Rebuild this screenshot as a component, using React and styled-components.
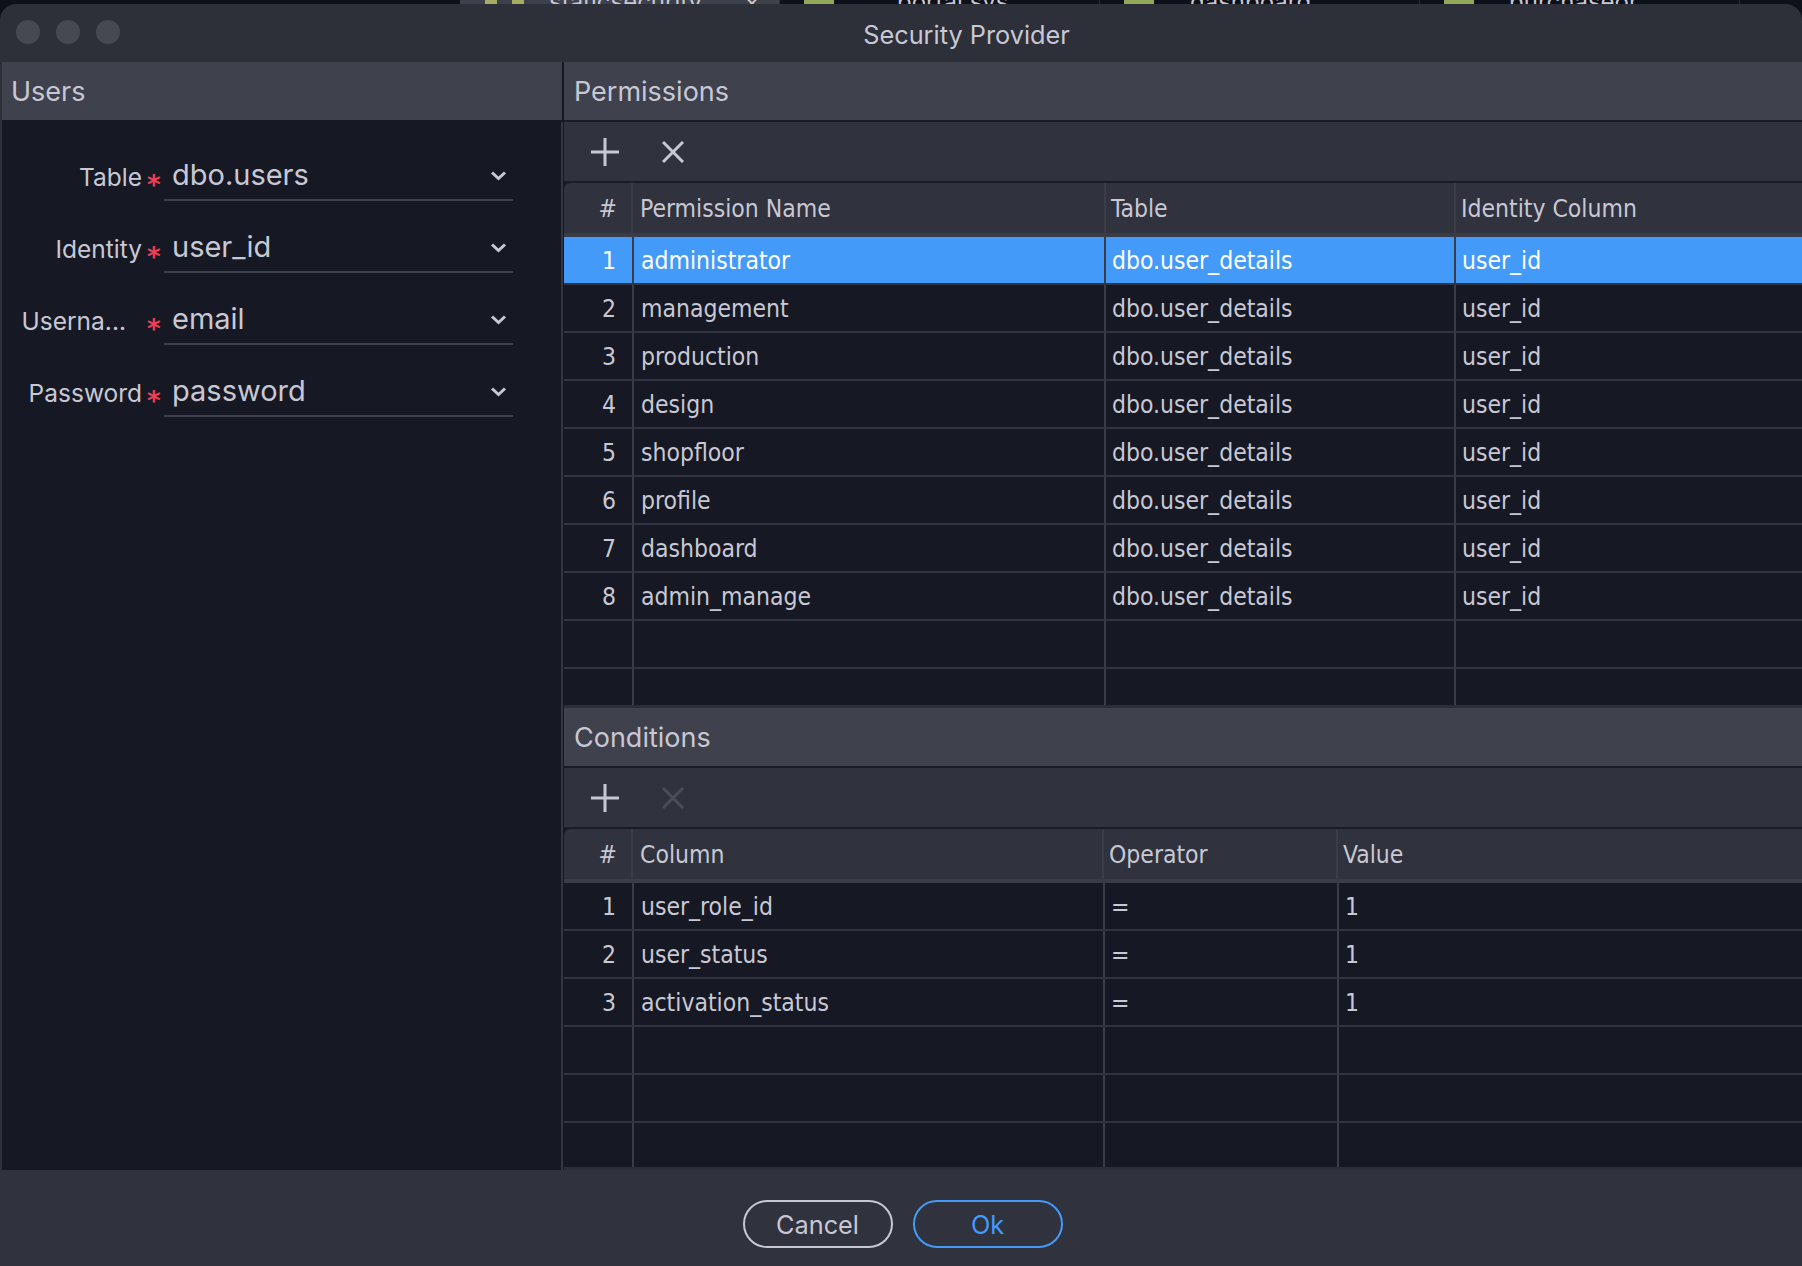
import styled, { createGlobalStyle } from 'styled-components'

const GlobalStyle = createGlobalStyle`
  html, body {
    margin: 0;
    padding: 0;
    background: #0e101a;
  }

  * {
    box-sizing: border-box;
  }
`

const Screen = styled.div`
  width: 1802px;
  height: 1266px;
  overflow: hidden;
  display: flex;
  flex-direction: column;
  font-family: Inter, "Liberation Sans", sans-serif;
  color: #c8c8d4;
`

const TabStrip = styled.div`
  height: 4px;
  flex: none;
  display: flex;
  overflow: hidden;
  padding-left: 460px;
  background: #0e101a;
`

const BgTab = styled.div`
  width: 320px;
  height: 4px;
  flex: none;
  display: flex;
  gap: 15px;
  padding-left: ${(p) => (p.$active ? '25px' : '24px')};
  background: ${(p) => (p.$active ? '#3e404b' : 'transparent')};
  border-right: 1px solid #2c2e38;
`

const BgTabIcon = styled.span`
  width: ${(p) => (p.$small ? '12px' : '30px')};
  height: 4px;
  flex: none;
  background: ${(p) => (p.$small ? '#a8ab62' : '#93a75a')};
`

const BgTabText = styled.span`
  margin-left: ${(p) => p.$inset}px;
  font-size: 24px;
  line-height: 18px;
  margin-top: -7px;
  color: #c8c8d4;
  white-space: nowrap;
`

const Window = styled.div`
  flex: 1;
  min-height: 0;
  display: flex;
  flex-direction: column;
  border-radius: 16px 16px 0 0;
  background: #2d2f39;
  overflow: hidden;
`

const TitleBar = styled.div`
  height: 58px;
  flex: none;
  position: relative;
  display: flex;
  align-items: center;
  justify-content: center;
  padding-left: 131px;
  padding-top: 3px;
  font-size: 25.3px;
  color: #c8c8d4;
`

const TrafficLights = styled.div`
  position: absolute;
  left: 16px;
  top: 16px;
  display: flex;
  gap: 16px;
`

const Light = styled.span`
  width: 24px;
  height: 24px;
  border-radius: 50%;
  background: #474952;
`

const Main = styled.div`
  flex: 1;
  min-height: 0;
  display: flex;
`

const LeftPanel = styled.section`
  width: 562px;
  flex: none;
  display: flex;
  flex-direction: column;
  margin-left: 2px;
  background: #161924;
`

const PanelHeader = styled.div`
  height: ${(p) => (p.$wide ? '60px' : '58px')};
  flex: none;
  display: flex;
  align-items: center;
  padding-left: ${(p) => (p.$left ? '9px' : '10px')};
  font-size: 27px;
  color: #c8c8d4;
  background: #3f414d;
  border-bottom: ${(p) => (p.$wide ? '2px solid #1a1c27' : 'none')};
  margin-right: ${(p) => (p.$left ? '2px' : '0')};
`

const UsersForm = styled.div`
  flex: 1;
  margin-top: 2px;
  margin-right: 1px;
  padding-top: 33px;
  padding-right: 48px;
  display: flex;
  flex-direction: column;
  gap: 26px;
  border-right: 2px solid #34363f;
`

const FormRow = styled.div`
  display: grid;
  grid-template-columns: 140px 22px 1fr;
  grid-template-rows: 46px;
`

const FieldLabel = styled.label`
  font-size: 24.5px;
  line-height: 44px;
  text-align: right;
  padding-right: ${(p) => (p.$clipped ? '16px' : '0')};
  white-space: nowrap;
  color: #c8c8d4;
`

const Required = styled.span`
  font-family: "DejaVu Sans", sans-serif;
  font-weight: 700;
  font-size: 26px;
  line-height: 46px;
  padding-left: 5px;
  padding-top: 7px;
  color: #f23e55;
`

const SelectBox = styled.div`
  display: flex;
  align-items: center;
  justify-content: space-between;
  padding: 0 7px 5px 8px;
  font-size: 29px;
  color: #c8c8d4;
  border-bottom: 2px solid #3e404b;
`

const SelectArrow = styled.svg`
  display: block;
  margin-top: 3px;
  fill: none;
  stroke: #c8c8d4;
  stroke-width: 3;
`

const RightPanel = styled.section`
  flex: 1;
  min-width: 0;
  display: flex;
  flex-direction: column;
`

const TableSection = styled.div`
  height: ${(p) => p.$height}px;
  flex: none;
  display: flex;
  flex-direction: column;
`

const Toolbar = styled.div`
  height: 61px;
  flex: none;
  display: flex;
  align-items: center;
  gap: 43px;
  padding-left: 27px;
  background: #30323d;
  border-bottom: 2px solid #1a1c27;
`

const ToolIcon = styled.svg`
  display: block;
  fill: none;
  stroke: ${(p) => (p.$disabled ? '#4a4c57' : '#c8c8d4')};
  stroke-width: 3;
`

const TableFrame = styled.div`
  flex: 1;
  min-height: 0;
  overflow: hidden;
  background: #161924;
  border-bottom: 3px solid #2b2d37;
  font-family: "DejaVu Sans", sans-serif;
  font-stretch: condensed;
  font-size: 24.5px;
`

const HeadRow = styled.div`
  display: grid;
  grid-template-columns: ${(p) => p.$columns};
  height: 54px;
  background: #30323d;
  border-bottom: 4px solid #3a3c47;
  border-top-left-radius: 6px;
  color: #c8c8d4;
`

const HeadCell = styled.div`
  display: flex;
  align-items: center;
  padding: 0 ${(p) => (p.$num ? '14px' : p.$first ? '7px' : '5px')};
  justify-content: ${(p) => (p.$num ? 'flex-end' : 'flex-start')};
  border-left: ${(p) => (p.$num ? 'none' : '2px solid #3a3c47')};
`

const BodyRow = styled.div`
  display: grid;
  grid-template-columns: ${(p) => p.$columns};
  height: 48px;
  background: ${(p) => (p.$selected ? '#439af8' : 'transparent')};
  color: ${(p) => (p.$selected ? '#ffffff' : '#c8c8d4')};
  border-bottom: 2px solid #31333d;
`

const BodyCell = styled.div`
  display: flex;
  align-items: center;
  padding: 0 ${(p) => (p.$num ? '16px' : p.$first ? '7px' : '6px')};
  justify-content: ${(p) => (p.$num ? 'flex-end' : 'flex-start')};
  border-left: ${(p) => (p.$num ? 'none' : '2px solid #3a3c46')};
  white-space: nowrap;
`

const Footer = styled.div`
  height: 96px;
  flex: none;
  display: flex;
  justify-content: center;
  gap: 20px;
  padding-top: 30px;
  padding-left: 3px;
  background: #30323d;
`

const DialogButton = styled.button`
  width: 150px;
  height: 48px;
  border-radius: 24px;
  background: transparent;
  border: 2px solid ${(p) => (p.$primary ? '#439af8' : '#c8c8d4')};
  color: ${(p) => (p.$primary ? '#439af8' : '#c8c8d4')};
  font-family: Inter, "Liberation Sans", sans-serif;
  font-size: 25.3px;
  padding: 0;
`

const userFields = [
  { label: 'Table', value: 'dbo.users' },
  { label: 'Identity', value: 'user_id' },
  { label: 'Userna...', value: 'email', clipped: true },
  { label: 'Password', value: 'password' },
]

const permissions = ['administrator', 'management', 'production', 'design', 'shopfloor', 'profile', 'dashboard', 'admin_manage']

const conditions = [
  ['user_role_id', '=', '1'],
  ['user_status', '=', '1'],
  ['activation_status', '=', '1'],
]

const permissionHeadCols = '67px 473px 350px 1fr'
const permissionBodyCols = '68px 472px 350px 1fr'
const conditionHeadCols = '67px 471px 234px 1fr'
const conditionBodyCols = '68px 471px 234px 1fr'

function PlusIcon() {
  return (
    <ToolIcon width="28" height="28" viewBox="0 0 28 28">
      <path d="M14 0v28M0 14h28" />
    </ToolIcon>
  )
}

function CloseIcon({ disabled }) {
  return (
    <ToolIcon $disabled={disabled} width="22" height="22" viewBox="0 0 22 22">
      <path d="M1 1l20 20M21 1L1 21" />
    </ToolIcon>
  )
}

function Chevron() {
  return (
    <SelectArrow width="15" height="10" viewBox="0 0 15 10">
      <path d="M1 1.5l6.5 6 6.5-6" />
    </SelectArrow>
  )
}

function DataHead({ columns, labels }) {
  return (
    <HeadRow $columns={columns}>
      <HeadCell $num>#</HeadCell>
      {labels.map((label, i) => (
        <HeadCell key={label} $first={i === 0}>{label}</HeadCell>
      ))}
    </HeadRow>
  )
}

function DataRow({ columns, index, cells, selected }) {
  return (
    <BodyRow $columns={columns} $selected={selected}>
      <BodyCell $num>{index}</BodyCell>
      {cells.map((cell, i) => (
        <BodyCell key={i} $first={i === 0}>{cell}</BodyCell>
      ))}
    </BodyRow>
  )
}

export default function App() {
  return (
    <>
      <GlobalStyle />
      <Screen>
        <TabStrip>
          <BgTab $active>
            <BgTabIcon $small />
            <BgTabIcon $small />
            <BgTabText $inset={10}>staticsecurity</BgTabText>
            <BgTabText $inset={27}>×</BgTabText>
          </BgTab>
          <BgTab>
            <BgTabIcon />
            <BgTabText $inset={48}>portal.svs</BgTabText>
          </BgTab>
          <BgTab>
            <BgTabIcon />
            <BgTabText $inset={21}>dashboard</BgTabText>
          </BgTab>
          <BgTab>
            <BgTabIcon />
            <BgTabText $inset={20}>purchaseor</BgTabText>
          </BgTab>
        </TabStrip>

        <Window>
          <TitleBar>
            <TrafficLights>
              <Light />
              <Light />
              <Light />
            </TrafficLights>
            Security Provider
          </TitleBar>

          <Main>
            <LeftPanel>
              <PanelHeader $left>Users</PanelHeader>
              <UsersForm>
                {userFields.map((field) => (
                  <FormRow key={field.label}>
                    <FieldLabel $clipped={field.clipped}>{field.label}</FieldLabel>
                    <Required>*</Required>
                    <SelectBox>
                      {field.value}
                      <Chevron />
                    </SelectBox>
                  </FormRow>
                ))}
              </UsersForm>
            </LeftPanel>

            <RightPanel>
              <TableSection $height={646}>
                <PanelHeader $wide>Permissions</PanelHeader>
                <Toolbar>
                  <PlusIcon />
                  <CloseIcon />
                </Toolbar>
                <TableFrame>
                  <DataHead columns={permissionHeadCols} labels={['Permission Name', 'Table', 'Identity Column']} />
                  {permissions.map((name, i) => (
                    <DataRow
                      key={name}
                      columns={permissionBodyCols}
                      index={i + 1}
                      cells={[name, 'dbo.user_details', 'user_id']}
                      selected={i === 0}
                    />
                  ))}
                  <DataRow columns={permissionBodyCols} cells={['', '', '']} />
                  <DataRow columns={permissionBodyCols} cells={['', '', '']} />
                </TableFrame>
              </TableSection>

              <TableSection $height={462}>
                <PanelHeader $wide>Conditions</PanelHeader>
                <Toolbar>
                  <PlusIcon />
                  <CloseIcon disabled />
                </Toolbar>
                <TableFrame>
                  <DataHead columns={conditionHeadCols} labels={['Column', 'Operator', 'Value']} />
                  {conditions.map((cells, i) => (
                    <DataRow key={cells[0]} columns={conditionBodyCols} index={i + 1} cells={cells} />
                  ))}
                  <DataRow columns={conditionBodyCols} cells={['', '', '']} />
                  <DataRow columns={conditionBodyCols} cells={['', '', '']} />
                  <DataRow columns={conditionBodyCols} cells={['', '', '']} />
                </TableFrame>
              </TableSection>
            </RightPanel>
          </Main>

          <Footer>
            <DialogButton>Cancel</DialogButton>
            <DialogButton $primary>Ok</DialogButton>
          </Footer>
        </Window>
      </Screen>
    </>
  )
}
